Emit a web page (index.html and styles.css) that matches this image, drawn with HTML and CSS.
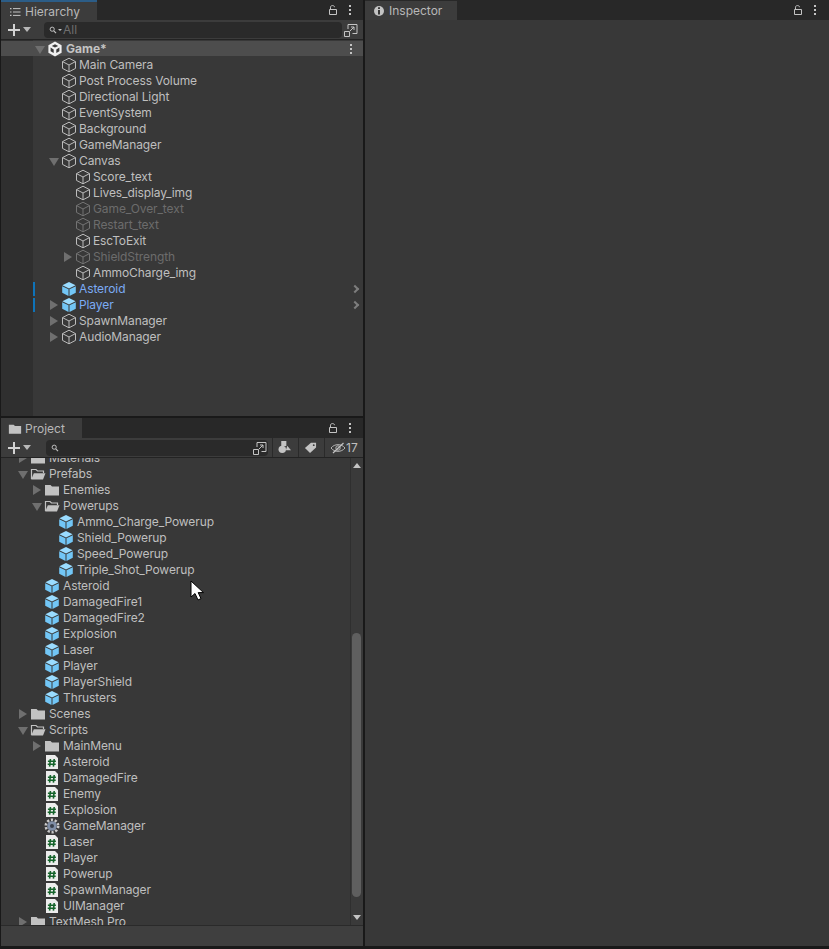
FILE: index.html
```html
<!DOCTYPE html>
<html lang="en">
<head>
<meta charset="utf-8">
<title>Unity Editor</title>
<link rel="stylesheet" href="styles.css">
</head>
<body>
<svg class="defs" width="0" height="0" aria-hidden="true">
  <defs>
    <symbol id="cube" viewBox="0 0 16 16"><path d="M8 1.2 14.5 4.6V11.4L8 14.8 1.5 11.4V4.6ZM1.5 4.6 8 8 14.5 4.6M8 8V14.8" fill="none" stroke="#bcbcbc" stroke-width="1" stroke-linejoin="round"/></symbol>
    <symbol id="prefab" viewBox="0 0 16 16"><path d="M8 1 14.6 4.3 8 7.4 1.4 4.3Z" fill="#9adcff"/><path d="M1.2 5.2 7.5 8.2V15L1.2 11.7Z" fill="#72c6f6"/><path d="M14.8 5.2 8.5 8.2V15L14.8 11.7Z" fill="#72c6f6"/></symbol>
    <symbol id="folder" viewBox="0 0 16 16"><path d="M1 3H6.5L8 4.5H15V13.5H1Z" fill="#c2c2c2"/></symbol>
    <symbol id="folder-open" viewBox="0 0 16 16"><path d="M1.5 13V3.5H6L7.5 5H13.5V7" fill="none" stroke="#c2c2c2" stroke-width="1.2"/><path d="M3.8 7.2H15.5L13 13.5H1.2Z" fill="#c2c2c2"/></symbol>
    <symbol id="script" viewBox="0 0 16 16"><path d="M2 1H11L14 4V15H2Z" fill="#ececec"/><path d="M6.4 5 5.6 12.6M10.2 5 9.4 12.6M3.9 7.2H11.9M3.7 10.3H11.7" fill="none" stroke="#14632a" stroke-width="1.6"/></symbol>
    <symbol id="gear" viewBox="0 0 16 16"><circle cx="8" cy="8" r="6.2" fill="none" stroke="#c9c9c9" stroke-width="2.6" stroke-dasharray="2.2 1.7"/><circle cx="8" cy="8" r="4.8" fill="#7f8ea6"/><circle cx="8" cy="8" r="2" fill="#39404c"/></symbol>
    <symbol id="unity" viewBox="0 0 16 16"><path d="M8 .6 14.6 4.2V11.8L8 15.4 1.4 11.8V4.2Z" fill="#f0f0f0"/><path d="M4.8 5 8 3.2 11.2 5 8 6.6ZM3.6 6.6 6.7 8.5V12L3.6 10.2ZM12.4 6.6 9.3 8.5V12L12.4 10.2Z" fill="#3a3a3a"/></symbol>
    <symbol id="lock" viewBox="0 0 12 12"><path d="M2.5 5.5H9.5V10.5H2.5Z" fill="none" stroke="#c4c4c4" stroke-width="1"/><path d="M3.5 5V3.2C3.5 1 7.5 1 7.5 3.2" fill="none" stroke="#c4c4c4" stroke-width="1"/></symbol>
    <symbol id="kebab" viewBox="0 0 4 12"><path d="M1 1H3V3H1ZM1 5H3V7H1ZM1 9H3V11H1Z" fill="#c4c4c4"/></symbol>
    <symbol id="expand" viewBox="0 0 16 16"><path d="M5 7V2.5H14V11.5H9.5" fill="none" stroke="#c4c4c4"/><path d="M1.5 9.5H6.5V14.5H1.5ZM7 9 11 5M8 5H11V8" fill="none" stroke="#c4c4c4"/></symbol>
    <symbol id="search" viewBox="0 0 10 10"><circle cx="4" cy="4" r="2.6" fill="none" stroke="#c4c4c4" stroke-width="1.2"/><path d="M6 6 8.8 8.8" stroke="#c4c4c4" stroke-width="1.4"/></symbol>
  </defs>
</svg>

<div class="editor">
  <div class="left">
    <section class="panel hierarchy">
      <div class="tabstrip">
        <div class="tab tab-active">
          <svg class="tab-icon" viewBox="0 0 12 12"><path d="M1 2H2.5V3.2H1ZM1 5.4H2.5V6.6H1ZM1 8.8H2.5V10H1Z" fill="#c4c4c4"/><path d="M4 2.6H11.5M4 6H11.5M4 9.4H11.5" stroke="#c4c4c4"/></svg>
          <span>Hierarchy</span>
        </div>
        <div class="tab-tools">
          <svg class="lock"><use href="#lock"/></svg>
          <svg class="kebab"><use href="#kebab"/></svg>
        </div>
      </div>
      <div class="toolbar">
        <div class="create"><span class="plus"></span><span class="drop"></span></div>
        <div class="search search-h">
          <svg class="search-icon"><use href="#search"/></svg>
          <i class="search-caret"></i>
          <span class="placeholder">All</span>
          <svg class="expand"><use href="#expand"/></svg>
        </div>
      </div>
      <div class="tree tree-h">
        <div class="row scene l0"><i class="arrow open"></i><svg class="ico"><use href="#unity"/></svg><b>Game*</b><svg class="kebab row-kebab"><use href="#kebab"/></svg></div>
        <div class="row l1"><i class="arrow none"></i><svg class="ico"><use href="#cube"/></svg><span>Main Camera</span></div>
        <div class="row l1"><i class="arrow none"></i><svg class="ico"><use href="#cube"/></svg><span>Post Process Volume</span></div>
        <div class="row l1"><i class="arrow none"></i><svg class="ico"><use href="#cube"/></svg><span>Directional Light</span></div>
        <div class="row l1"><i class="arrow none"></i><svg class="ico"><use href="#cube"/></svg><span>EventSystem</span></div>
        <div class="row l1"><i class="arrow none"></i><svg class="ico"><use href="#cube"/></svg><span>Background</span></div>
        <div class="row l1"><i class="arrow none"></i><svg class="ico"><use href="#cube"/></svg><span>GameManager</span></div>
        <div class="row l1"><i class="arrow open"></i><svg class="ico"><use href="#cube"/></svg><span>Canvas</span></div>
        <div class="row l2"><i class="arrow none"></i><svg class="ico"><use href="#cube"/></svg><span>Score_text</span></div>
        <div class="row l2"><i class="arrow none"></i><svg class="ico"><use href="#cube"/></svg><span>Lives_display_img</span></div>
        <div class="row l2 off"><i class="arrow none"></i><svg class="ico"><use href="#cube"/></svg><span>Game_Over_text</span></div>
        <div class="row l2 off"><i class="arrow none"></i><svg class="ico"><use href="#cube"/></svg><span>Restart_text</span></div>
        <div class="row l2"><i class="arrow none"></i><svg class="ico"><use href="#cube"/></svg><span>EscToExit</span></div>
        <div class="row l2 off"><i class="arrow closed"></i><svg class="ico"><use href="#cube"/></svg><span>ShieldStrength</span></div>
        <div class="row l2"><i class="arrow none"></i><svg class="ico"><use href="#cube"/></svg><span>AmmoCharge_img</span></div>
        <div class="row l1 pf"><i class="bar"></i><i class="arrow none"></i><svg class="ico"><use href="#prefab"/></svg><span>Asteroid</span><i class="chev"></i></div>
        <div class="row l1 pf"><i class="bar"></i><i class="arrow closed"></i><svg class="ico"><use href="#prefab"/></svg><span>Player</span><i class="chev"></i></div>
        <div class="row l1"><i class="arrow closed"></i><svg class="ico"><use href="#cube"/></svg><span>SpawnManager</span></div>
        <div class="row l1"><i class="arrow closed"></i><svg class="ico"><use href="#cube"/></svg><span>AudioManager</span></div>
      </div>
    </section>

    <section class="panel project">
      <div class="tabstrip">
        <div class="tab tab-project">
          <svg class="tab-icon tab-folder"><use href="#folder"/></svg>
          <span>Project</span>
        </div>
        <div class="tab-tools">
          <svg class="lock"><use href="#lock"/></svg>
          <svg class="kebab"><use href="#kebab"/></svg>
        </div>
      </div>
      <div class="toolbar">
        <div class="create"><span class="plus"></span><span class="drop"></span></div>
        <div class="search search-p">
          <svg class="search-icon"><use href="#search"/></svg>
          <svg class="expand"><use href="#expand"/></svg>
        </div>
        <div class="tool-btn">
          <svg class="tool-icon" viewBox="0 0 14 14"><path d="M3.5 0H9V5.5H3.5Z" fill="#c4c4c4"/><circle cx="4.6" cy="9" r="4" fill="#c4c4c4"/><path d="M10 5 14 10H8.5Z" fill="#c4c4c4"/></svg>
        </div>
        <div class="tool-btn">
          <svg class="tool-icon" viewBox="0 0 14 14"><path d="M1 7.5 7.5 2H13V7L6.5 13Z" fill="#c4c4c4"/><circle cx="10.5" cy="4.5" r="1" fill="#3c3c3c"/></svg>
        </div>
        <div class="tool-btn tool-eye">
          <svg class="eye" viewBox="0 0 16 14"><path d="M1 7C4.5 2.5 11.5 2.5 15 7 11.5 11.5 4.5 11.5 1 7Z" fill="none" stroke="#b4b4b4"/><circle cx="8" cy="7" r="2.2" fill="none" stroke="#b4b4b4"/><path d="M3 12 13.5 2" stroke="#c4c4c4" stroke-width="1.2"/></svg>
          <span>17</span>
        </div>
      </div>
      <div class="tree-wrap">
        <div class="tree tree-p">
          <div class="row p0 first"><i class="arrow closed"></i><svg class="ico"><use href="#folder"/></svg><span>Materials</span></div>
          <div class="row p0"><i class="arrow open"></i><svg class="ico"><use href="#folder-open"/></svg><span>Prefabs</span></div>
          <div class="row p1"><i class="arrow closed"></i><svg class="ico"><use href="#folder"/></svg><span>Enemies</span></div>
          <div class="row p1"><i class="arrow open"></i><svg class="ico"><use href="#folder-open"/></svg><span>Powerups</span></div>
          <div class="row p2"><i class="arrow none"></i><svg class="ico"><use href="#prefab"/></svg><span>Ammo_Charge_Powerup</span></div>
          <div class="row p2"><i class="arrow none"></i><svg class="ico"><use href="#prefab"/></svg><span>Shield_Powerup</span></div>
          <div class="row p2"><i class="arrow none"></i><svg class="ico"><use href="#prefab"/></svg><span>Speed_Powerup</span></div>
          <div class="row p2"><i class="arrow none"></i><svg class="ico"><use href="#prefab"/></svg><span>Triple_Shot_Powerup</span></div>
          <div class="row p1"><i class="arrow none"></i><svg class="ico"><use href="#prefab"/></svg><span>Asteroid</span></div>
          <div class="row p1"><i class="arrow none"></i><svg class="ico"><use href="#prefab"/></svg><span>DamagedFire1</span></div>
          <div class="row p1"><i class="arrow none"></i><svg class="ico"><use href="#prefab"/></svg><span>DamagedFire2</span></div>
          <div class="row p1"><i class="arrow none"></i><svg class="ico"><use href="#prefab"/></svg><span>Explosion</span></div>
          <div class="row p1"><i class="arrow none"></i><svg class="ico"><use href="#prefab"/></svg><span>Laser</span></div>
          <div class="row p1"><i class="arrow none"></i><svg class="ico"><use href="#prefab"/></svg><span>Player</span></div>
          <div class="row p1"><i class="arrow none"></i><svg class="ico"><use href="#prefab"/></svg><span>PlayerShield</span></div>
          <div class="row p1"><i class="arrow none"></i><svg class="ico"><use href="#prefab"/></svg><span>Thrusters</span></div>
          <div class="row p0"><i class="arrow closed"></i><svg class="ico"><use href="#folder"/></svg><span>Scenes</span></div>
          <div class="row p0"><i class="arrow open"></i><svg class="ico"><use href="#folder-open"/></svg><span>Scripts</span></div>
          <div class="row p1"><i class="arrow closed"></i><svg class="ico"><use href="#folder"/></svg><span>MainMenu</span></div>
          <div class="row p1"><i class="arrow none"></i><svg class="ico"><use href="#script"/></svg><span>Asteroid</span></div>
          <div class="row p1"><i class="arrow none"></i><svg class="ico"><use href="#script"/></svg><span>DamagedFire</span></div>
          <div class="row p1"><i class="arrow none"></i><svg class="ico"><use href="#script"/></svg><span>Enemy</span></div>
          <div class="row p1"><i class="arrow none"></i><svg class="ico"><use href="#script"/></svg><span>Explosion</span></div>
          <div class="row p1"><i class="arrow none"></i><svg class="ico"><use href="#gear"/></svg><span>GameManager</span></div>
          <div class="row p1"><i class="arrow none"></i><svg class="ico"><use href="#script"/></svg><span>Laser</span></div>
          <div class="row p1"><i class="arrow none"></i><svg class="ico"><use href="#script"/></svg><span>Player</span></div>
          <div class="row p1"><i class="arrow none"></i><svg class="ico"><use href="#script"/></svg><span>Powerup</span></div>
          <div class="row p1"><i class="arrow none"></i><svg class="ico"><use href="#script"/></svg><span>SpawnManager</span></div>
          <div class="row p1"><i class="arrow none"></i><svg class="ico"><use href="#script"/></svg><span>UIManager</span></div>
          <div class="row p0"><i class="arrow closed"></i><svg class="ico"><use href="#folder"/></svg><span>TextMesh Pro</span></div>
        </div>
        <div class="scrollbar">
          <i class="sb-up"></i>
          <div class="sb-space"></div>
          <div class="sb-thumb"></div>
          <i class="sb-down"></i>
        </div>
      </div>
      <div class="footer"></div>
    </section>
  </div>

  <section class="panel inspector">
    <div class="tabstrip">
      <div class="tab tab-inspector">
        <svg class="tab-icon tab-info" viewBox="0 0 12 12"><circle cx="6" cy="6" r="5" fill="#c4c4c4"/><path d="M5 2.3H7V4H5ZM5 5H7V9.6H5Z" fill="#383838"/></svg>
        <span>Inspector</span>
      </div>
      <div class="tab-tools tab-tools-wide">
        <svg class="lock"><use href="#lock"/></svg>
        <svg class="kebab"><use href="#kebab"/></svg>
      </div>
    </div>
    <div class="inspector-body"></div>
  </section>
</div>

<svg class="cursor" viewBox="0 0 16 22"><path d="M1 1V17L5 13.5 8 20 11 18.6 8.2 12.6H13.5Z" fill="#fff" stroke="#000"/></svg>
</body>
</html>
```

FILE: styles.css
```css
* { box-sizing: border-box; }
html, body { margin: 0; height: 100%; }
body {
  background: #191919;
  color: #bfbfbf;
  font: 12px/16px Inter, "Liberation Sans", sans-serif;
  overflow: hidden;
}
.defs { position: absolute; }
.editor {
  display: flex;
  gap: 2px;
  width: 829px;
  height: 946px;
  padding-left: 1px;
}
.left {
  width: 362px;
  display: flex;
  flex-direction: column;
  gap: 2px;
}
.panel { display: flex; flex-direction: column; min-height: 0; }
.hierarchy { height: 416px; }
.project { flex: 1; }
.inspector { flex: 1; }

.tabstrip {
  height: 20px;
  flex: none;
  display: flex;
  justify-content: space-between;
  background: #282828;
}
.tab {
  display: flex;
  align-items: center;
  background: #3c3c3c;
  font-size: 12px;
  color: #b8b8b8;
}
.tab-active { width: 96px; padding: 2px 0 0 8px; border-top: 2px solid #2c5d87; }
.tab-project { width: 81px; padding: 2px 0 0 7px; }
.tab-inspector { width: 92px; padding-left: 8px; margin-top: 1px; }
.tab-icon { width: 12px; height: 12px; margin-right: 4px; flex: none; }
.tab-folder { width: 14px; height: 14px; margin-right: 3px; }
.tab-info { margin-right: 4px; }
.tab-tools { display: flex; align-items: center; gap: 9px; padding-right: 11px; }
.tab-tools-wide { padding-right: 12px; }
.lock { width: 12px; height: 12px; }
.kebab { width: 4px; height: 12px; }

.toolbar {
  height: 20px;
  flex: none;
  display: flex;
  align-items: center;
  background: #3c3c3c;
  border-bottom: 1px solid #232323;
}
.create { width: 43px; display: flex; align-items: center; padding-left: 7px; gap: 3px; flex: none; }
.plus {
  width: 12px;
  height: 12px;
  background:
    linear-gradient(#d2d2d2, #d2d2d2) center / 12px 2px no-repeat,
    linear-gradient(#d2d2d2, #d2d2d2) center / 2px 12px no-repeat;
}
.drop {
  width: 0;
  height: 0;
  border-left: 4px solid transparent;
  border-right: 4px solid transparent;
  border-top: 5px solid #b8b8b8;
}
.search {
  height: 16px;
  display: flex;
  align-items: center;
  background: #2a2a2a;
  border-radius: 4px;
  padding-left: 5px;
  color: #6e6e6e;
  position: relative;
}
.search-h { width: 298px; }
.search-p { width: 222px; margin-left: 2px; flex: none; }
.search-icon { width: 8px; height: 8px; flex: none; }
.search-caret {
  width: 0;
  height: 0;
  margin: 0 1px;
  border-left: 2px solid transparent;
  border-right: 2px solid transparent;
  border-top: 2px solid #c4c4c4;
}
.placeholder { font-size: 12px; }
.expand {
  width: 16px;
  height: 16px;
  position: absolute;
  top: 0;
}
.search-h .expand { right: -17px; }
.search-p .expand { right: 0; }
.tool-btn {
  height: 19px;
  width: 26px;
  border-left: 1px solid #2a2a2a;
  padding-right: 3px;
  display: flex;
  align-items: center;
  justify-content: center;
  flex: none;
}
.search-p + .tool-btn { margin-left: 4px; }
.tool-icon { width: 13px; height: 13px; }
.tool-eye { width: 39px; justify-content: flex-start; padding: 0 0 0 5px; gap: 0; font-size: 12px; }
.eye { width: 16px; height: 14px; flex: none; }

.tree { flex: 1; overflow: hidden; min-height: 0; background: #383838; }
.tree-h {
  background: linear-gradient(90deg, #2f2f2f 32px, #383838 32px);
  padding-top: 1px;
}
.tree-wrap { flex: 1; display: flex; min-height: 0; overflow: hidden; }
.tree-p { min-width: 0; }
.row {
  height: 16px;
  display: flex;
  align-items: center;
  white-space: nowrap;
  position: relative;
  color: #bfbfbf;
  letter-spacing: -.1px;
}
.row.first { margin-top: -8px; }
.l0 { padding-left: 32px; }
.l1 { padding-left: 46px; }
.l2 { padding-left: 60px; }
.p0 { padding-left: 15px; }
.p1 { padding-left: 29px; }
.p2 { padding-left: 43px; }
.p0 .ico, .p1 .ico, .p2 .ico { margin-right: 3px; }
.arrow { width: 14px; height: 16px; flex: none; position: relative; }
.arrow::after { content: ""; position: absolute; width: 0; height: 0; }
.arrow.open::after {
  left: 2px;
  top: 5px;
  border-left: 5px solid transparent;
  border-right: 5px solid transparent;
  border-top: 8px solid #6f6f6f;
}
.arrow.closed::after {
  left: 3px;
  top: 3px;
  border-top: 5px solid transparent;
  border-bottom: 5px solid transparent;
  border-left: 8px solid #6f6f6f;
}
.ico { width: 16px; height: 16px; flex: none; margin-right: 2px; }
.scene { background: #4d4d4d; height: 15px; margin-bottom: 1px; letter-spacing: 0; }
.scene b { font-weight: 700; margin-left: 1px; color: #c4c4c4; }
.row-kebab { position: absolute; right: 10px; top: 2px; }
.off span { color: #6c6c6c; }
.off .ico { opacity: .45; }
.pf span { color: #7babf5; }
.bar { position: absolute; left: 32px; top: 1px; width: 2px; height: 14px; background: #0f73b8; }
.chev {
  position: absolute;
  left: 351px;
  top: 5px;
  width: 6px;
  height: 6px;
  border-top: 2px solid #7d7d7d;
  border-right: 2px solid #7d7d7d;
  transform: rotate(45deg);
}

.scrollbar {
  width: 13px;
  flex: none;
  display: flex;
  flex-direction: column;
  align-items: center;
  padding: 5px 3px 6px 2px;
  background: #3a3a3a;
  border-left: 1px solid #2f2f2f;
}
.sb-up, .sb-down {
  width: 0;
  height: 0;
  flex: none;
  border-left: 4px solid transparent;
  border-right: 4px solid transparent;
}
.sb-up { border-bottom: 5px solid #c4c4c4; }
.sb-down { border-top: 5px solid #c4c4c4; }
.sb-space { height: 165px; flex: none; }
.sb-thumb {
  width: 9px;
  height: 264px;
  flex: none;
  background: #5f5f5f;
  border-radius: 5px;
  margin-bottom: 18px;
}
.footer {
  height: 21px;
  flex: none;
  background: #3f3f3f;
  border-top: 1px solid #2a2a2a;
}
.inspector-body { flex: 1; background: #383838; }

.cursor {
  position: absolute;
  left: 190px;
  top: 580px;
  width: 16px;
  height: 22px;
}
```
